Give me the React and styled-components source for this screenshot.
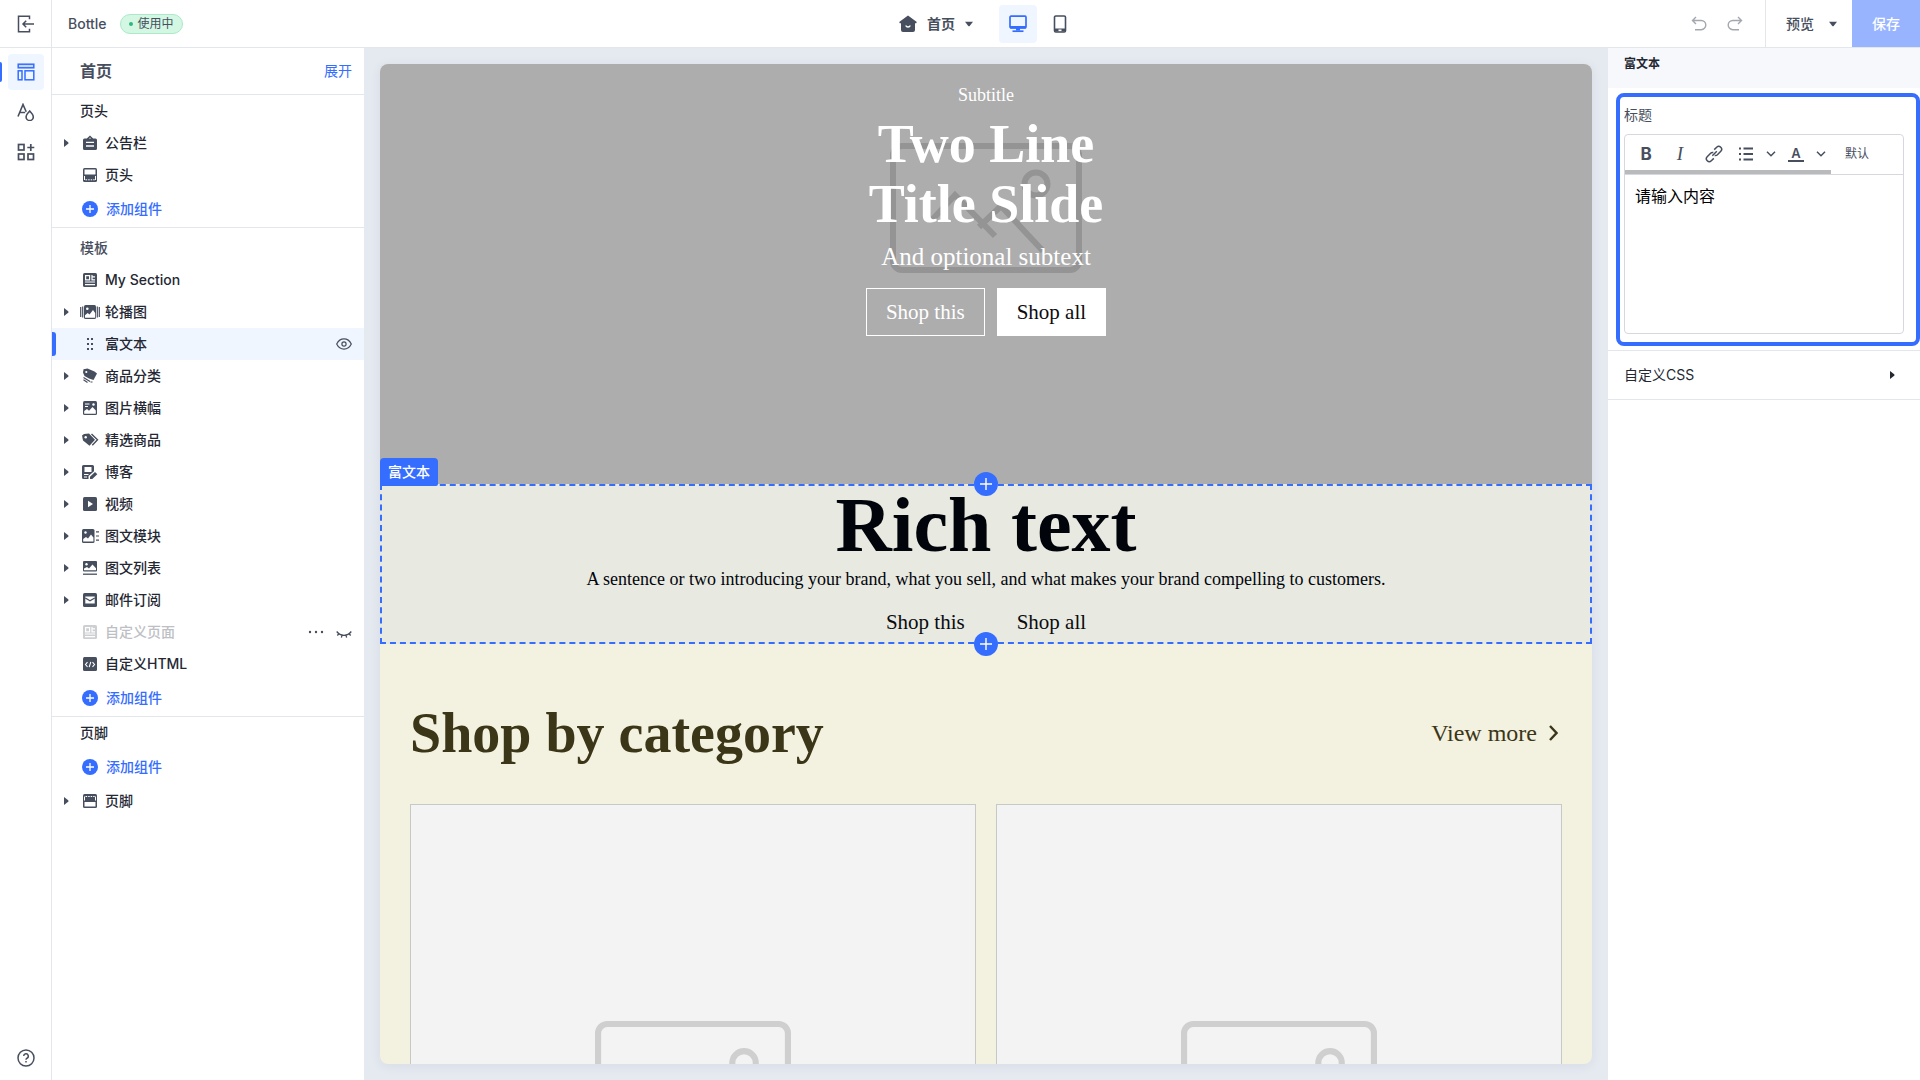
import React from 'react';
import styled, { createGlobalStyle, css } from 'styled-components';

const BLUE = '#356dff';
const INK = '#474f5e';
const LINE = '#e3e7eb';
const SERIF = '"Liberation Serif", "Noto Sans CJK SC", serif';

const GlobalStyle = createGlobalStyle`
  * { box-sizing: border-box; }
  body {
    margin: 0;
    font-family: Inter, "Noto Sans CJK SC", sans-serif;
    font-size: 14px;
    line-height: 20px;
    color: #242833;
  }
  button {
    font: inherit;
    color: inherit;
    background: none;
    border: 0;
    padding: 0;
    cursor: pointer;
  }
  h1, h2, h3, p, ul { margin: 0; padding: 0; font-weight: inherit; font-size: inherit; }
  ul { list-style: none; }
  svg { display: block; flex: none; }
`;

/* ---------- icons ---------- */

const Svg = ({ w = 16, h = w, box = `0 0 ${w} ${h}`, children, ...rest }) => (
  <svg width={w} height={h} viewBox={box} fill="none" aria-hidden="true" {...rest}>
    {children}
  </svg>
);

const Stroke = ({ children, sw = 1.3, ...rest }) => (
  <Svg stroke="currentColor" strokeWidth={sw} {...rest}>{children}</Svg>
);

const BackIcon = () => (
  <Stroke w={18} sw={1.5}>
    <path d="M12.5 4.2V1.2H1.5v15.600h11v-3M17 9H6M9.200 5.800 6 9l3.200 3.200" />
  </Stroke>
);

const LayoutIcon = () => (
  <Stroke w={18} sw={1.5}>
    <rect x="1.200" y="1.200" width="15.600" height="3.600" fill="#c6d8ff" />
    <rect x="1.200" y="7.800" width="3.800" height="9" />
    <rect x="8" y="7.800" width="8.800" height="9" />
  </Stroke>
);

const ThemeIcon = () => (
  <Stroke w={18} sw={1.6}>
    <path d="M1 13.500 6 1.500l3.200 7.300M2.700 9.500h5.500" />
    <path d="M12.700 8c2.300 2.400 3.600 4.300 3.600 5.900a3.600 3.600 0 0 1-7.200 0c0-1.600 1.300-3.500 3.600-5.900Z" />
  </Stroke>
);

const AppsIcon = () => (
  <Stroke w={18} sw={1.700}>
    <rect x="1.500" y="1.500" width="5.500" height="5.500" />
    <rect x="1.500" y="11" width="5.500" height="5.500" />
    <rect x="11" y="11" width="5.500" height="5.500" />
    <path d="M13.800 1v7M10.300 4.500h7" />
  </Stroke>
);

const HelpIcon = () => (
  <Stroke w={18} sw={1.500}>
    <circle cx="9" cy="9" r="8" />
    <path d="M6.700 7.100a2.300 2.300 0 1 1 3.300 2.100c-.7.350-1 .7-1 1.500" />
    <path d="M9 12v1.600" />
  </Stroke>
);

const HomeIcon = () => (
  <Svg w={18}>
    <path fill="currentColor" d="M9 .5 17.800 7l-.6 1.200H16V15a2 2 0 0 1-2 2H4a2 2 0 0 1-2-2V8.200H.8L.2 7Z" />
    <path stroke="#fff" strokeWidth="1.300" d="M6.700 10.500c.8 2 3.800 2 4.600 0" />
  </Svg>
);

const DesktopIcon = () => (
  <Stroke w={18} sw={1.700}>
    <rect x="1" y="1.200" width="16" height="11.600" rx="1" />
    <path fill="currentColor" stroke="none" d="M1 11h16v2.500H1zM7 13h4v2.500H7z" />
    <path d="M3.500 16.200h11" />
  </Stroke>
);

const MobileIcon = () => (
  <Stroke w={18} sw={1.600}>
    <rect x="3.500" y="1" width="11" height="16" rx="1.300" />
    <path fill="currentColor" stroke="none" d="M3.500 13.500h11v3h-11z" />
    <path stroke="#fff" d="M7.500 15.300h3" />
  </Stroke>
);

const UndoIcon = ({ flip }) => (
  <Stroke w={16} sw={1.400} transform={flip ? 'scale(-1 1)' : undefined}>
    <path d="M1.500 4.500h8.700a4.600 4.600 0 0 1 0 9.200H4M5 1 1.500 4.500 5 8" />
  </Stroke>
);

const CaretDown = () => (
  <Svg w={8} h={6}><path fill="currentColor" d="M0 .8h8L4.700 5a1 1 0 0 1-1.400 0Z" /></Svg>
);

const CaretRight = () => (
  <Svg w={5} h={8}><path fill="currentColor" d="M0 0v8l4.200-3.300a1 1 0 0 0 0-1.400Z" /></Svg>
);

const ChevronDown = () => (
  <Stroke w={10} h={6} sw={1.500}><path d="m1 .8 4 4 4-4" /></Stroke>
);

const EyeIcon = () => (
  <Stroke w={16} h={16} sw={1.200}>
    <path d="M.7 8C2.400 4.500 5 2.900 8 2.900S13.600 4.500 15.300 8C13.600 11.500 11 13.100 8 13.100S2.400 11.500.7 8Z" />
    <circle cx="8" cy="8" r="2.100" />
  </Stroke>
);

const EyeClosedIcon = () => (
  <Stroke w={16} h={16} sw={1.300}>
    <path d="M.7 7.500C4.500 12.600 11.500 12.600 15.300 7.500M3 9.700l-1.700 1.800M6 11.200l-.6 2.400M10 11.200l.6 2.400M13 9.700l1.700 1.800" />
  </Stroke>
);

const MoreIcon = () => (
  <Svg w={16} fill="currentColor">
    <circle cx="2" cy="8" r="1.200" /><circle cx="8" cy="8" r="1.200" /><circle cx="14" cy="8" r="1.200" />
  </Svg>
);

const AddIcon = () => (
  <Svg w={16}>
    <circle cx="8" cy="8" r="8" fill={BLUE} />
    <path stroke="#fff" strokeWidth="1.300" d="M8 4v8M4 8h8" />
  </Svg>
);

// filled 14px block that most of the section icons are cut out of
const Block = ({ children }) => (
  <Svg w={18} box="-1 -1 18 18">
    <rect x="1" y="1" width="14" height="14" rx="1.500" fill="currentColor" />
    {children}
  </Svg>
);

const sectionIcons = {
  notice: (
    <Svg w={18} box="-1 -1 18 18">
      <path fill="currentColor" d="M2.500 3.500h2.300L8 .6l3.200 2.900h2.300A1.500 1.500 0 0 1 15 5v8.500a1.500 1.500 0 0 1-1.500 1.500h-11A1.500 1.500 0 0 1 1 13.500V5a1.500 1.500 0 0 1 1.500-1.500Z" />
      <path stroke="#fff" strokeWidth="1.300" d="M4 7.300h8M4 11h8" />
      <path fill="#fff" d="M6.800 3.500 8 2.400l1.200 1.100Z" />
    </Svg>
  ),
  header: (
    <Block>
      <path fill="#fff" d="M2.500 2.500h11V7.500h-11z" />
      <path stroke="#fff" d="M3.500 12.800h1.700M6.200 12.800h1.500M8.700 12.800h1.500M11.200 12.800h1.500M2.500 9v4M13.500 9v4" />
    </Block>
  ),
  footer: (
    <Block>
      <path fill="#fff" d="M2.500 9h11v4.500h-11z" />
      <path stroke="#fff" d="M3.500 3.500h1.700M6.200 3.500h1.500M8.700 3.500h1.500M11.200 3.500h1.500M2.500 3.500v4M13.500 3.500v4" />
    </Block>
  ),
  section: (
    <Block>
      <path stroke="#fff" strokeWidth="1.200" d="M3.600 3.600h4v4.200h-4zM10 3v4.800h3M10 4.800h3M3 10h10M3 12.600h10" />
    </Block>
  ),
  carousel: (
    <Svg w={20} h={18} box="-2 -1 20 18">
      <rect x="2" y="1" width="12" height="14" rx="1.500" fill="currentColor" />
      <path stroke="currentColor" strokeWidth="1.200" d="M-1.300 3v10M.7 2.500v11M15.300 2.500v11M17.300 3v10" />
      <circle cx="5.300" cy="4.800" r="1.300" fill="#fff" />
      <path fill="#fff" d="m3 13.700v-2.400l2.700-2.300 1.800 1.500L11 6l2.200 3v4.700Z" />
    </Svg>
  ),
  drag: (
    <Svg w={18} fill="currentColor">
      {[3, 8, 13].map((y) => (
        <React.Fragment key={y}>
          <rect x="6" y={y} width="2" height="2" />
          <rect x="10" y={y} width="2" height="2" />
        </React.Fragment>
      ))}
    </Svg>
  ),
  category: (
    <Svg w={18}>
      <path fill="currentColor" d="M2.500 2.200 6.500 1.500l7 3 2.500 2L12.500 13 8 11.500 3.500 9 2 5.500Z" />
      <circle cx="5.300" cy="5" r="1.100" fill="#fff" />
      <path stroke="currentColor" strokeWidth="1.200" d="M2.500 10.500 9 14.500M2.500 12.800 6.500 15.500M9.500 15h2" />
    </Svg>
  ),
  banner: (
    <Block>
      <path stroke="#fff" d="M3 4h4.500M3 6.500h3" />
      <circle cx="11.500" cy="4.500" r="1.200" fill="#fff" />
      <path fill="#fff" d="M2.200 13.800v-2.700L5 9l2 1.700L10.500 7l3.300 3.500v3.300Z" />
    </Block>
  ),
  products: (
    <Svg w={18}>
      <path fill="currentColor" d="M1 4.500 3 3l5-.5 6 6.300-5.500 6L2 9.500Z" />
      <circle cx="4.700" cy="6.200" r="1.200" fill="#fff" />
      <path stroke="currentColor" strokeWidth="1.400" d="m10.500 3 6 5.700-5.200 5.500" />
    </Svg>
  ),
  blog: (
    <Svg w={18}>
      <path fill="currentColor" d="M2.500 2h9A1.500 1.500 0 0 1 13 3.500v4.800L7.500 13v3h-5A1.500 1.500 0 0 1 1 14.500v-11A1.500 1.500 0 0 1 2.500 2ZM9 13.800 14 9l2.300 2.200-5 4.800H9Z" />
      <path fill="#fff" d="M3.500 4h7v5h-7z" />
      <path stroke="#fff" d="M3 11.500h4.500M3 14h3" />
    </Svg>
  ),
  video: (
    <Block>
      <path fill="#fff" d="M6 4.800v6.400L11 8Z" />
    </Block>
  ),
  imageText: (
    <Svg w={18}>
      <rect x="1" y="2" width="12.500" height="14" rx="1.500" fill="currentColor" />
      <circle cx="4.500" cy="5.500" r="1.200" fill="#fff" />
      <path fill="#fff" d="M2.200 14.500V12L5 10l2 1.500L10 7.500l2.400 3v4Z" />
      <path stroke="currentColor" strokeWidth="1.200" d="M15 4.800h3M15 9h3M15 13.200h3" />
    </Svg>
  ),
  imageList: (
    <Svg w={18}>
      <rect x="2" y="2" width="14" height="10.500" rx="1" fill="currentColor" />
      <circle cx="5.500" cy="5.300" r="1.200" fill="#fff" />
      <path fill="#fff" d="M3 11.300V9.500L6 8l2 1.500L11.500 5.500l3.500 3.800v2Z" />
      <path stroke="currentColor" strokeWidth="1.300" d="M2 15.200h14" />
    </Svg>
  ),
  mail: (
    <Block>
      <path fill="#fff" d="M3.300 4.500h9.400v7H3.300z" />
      <path stroke="currentColor" strokeWidth="1.300" d="m3.300 6 4.700 2.800L12.700 6" />
    </Block>
  ),
  html: (
    <Block>
      <path stroke="#fff" strokeWidth="1.100" d="M5.500 6.200 3.500 8.500l2 2.300M10.500 6.200l2 2.300-2 2.300M8.800 5.800 7.200 11.200" />
    </Block>
  ),
};

const LinkIcon = () => (
  <Stroke w={18} sw={1.500}>
    <path d="m7.300 10.700 4.500-4.500M9.200 4.600 11.700 2.200a2.900 2.900 0 0 1 4.100 4.100l-3.400 3.500a2.900 2.900 0 0 1-2.700.7M8.800 13.400l-2.500 2.400a2.900 2.900 0 0 1-4.100-4.100l3.400-3.500a2.900 2.900 0 0 1 2.700-.7" />
  </Stroke>
);

const ListIcon = () => (
  <Stroke w={16} sw={2}>
    <path d="M1 2.500h2M1 8h2M1 13.500h2M5.500 2.500H15M5.500 8H15M5.500 13.500H15" />
  </Stroke>
);

const Placeholder = ({ w }) => (
  <Svg w={w} h={(w * 130) / 192} box="0 0 192 130" stroke="currentColor" strokeWidth="6">
    <rect x="3" y="3" width="186" height="124" rx="9" />
    <circle cx="146" cy="41" r="11.500" />
    <path d="m42 77 23-25 40 41M89 84l22-21 42 45" />
  </Svg>
);

/* ---------- layout ---------- */

const Shell = styled.div`
  display: grid;
  grid-template-rows: 48px minmax(0, 1fr);
  height: 100vh;
  background: #fff;
`;

const columns = css`
  display: grid;
  grid-template-columns: 52px 312px minmax(0, 1fr) 312px;
`;

const TopBar = styled.header`
  ${columns}
  border-bottom: 1px solid ${LINE};
  color: ${INK};
`;

const Body = styled.div`
  ${columns}
  min-height: 0;
`;

const ExitButton = styled.button`
  display: grid;
  place-items: center;
  border-right: 1px solid ${LINE};
`;

const ThemeName = styled.div`
  display: flex;
  align-items: center;
  gap: 13px;
  padding-left: 16px;
  font-weight: 500;
`;

const Status = styled.span`
  display: flex;
  align-items: center;
  gap: 5px;
  height: 20px;
  padding: 0 8px;
  border: 1px solid #abe9c9;
  border-radius: 10px;
  background: #d3f7e3;
  font-size: 12px;
  font-weight: 400;

  &::before {
    content: '';
    width: 4px;
    height: 4px;
    border-radius: 50%;
    background: #35b67c;
  }
`;

const PageSwitch = styled.div`
  display: flex;
  align-items: center;
  justify-content: center;
  gap: 4px;
  padding-left: 6px;
`;

const PageButton = styled.button`
  display: flex;
  align-items: center;
  gap: 10px;
  margin-right: 22px;
  font-weight: 600;
`;

const DeviceButton = styled.button`
  display: grid;
  place-items: center;
  width: 38px;
  height: 38px;
  border-radius: 4px;
  color: ${(p) => (p.$active ? BLUE : INK)};
  background: ${(p) => (p.$active ? '#eff6ff' : 'none')};
`;

const Actions = styled.div`
  display: flex;
  justify-content: flex-end;
`;

const History = styled.div`
  display: flex;
  align-items: center;
  gap: 20px;
  padding-right: 22px;
  color: #a3a7af;
`;

const PreviewButton = styled.button`
  display: flex;
  align-items: center;
  gap: 15px;
  padding: 0 15px 0 20px;
  border-left: 1px solid ${LINE};
  font-weight: 500;
`;

const SaveButton = styled.button`
  width: 68px;
  background: #99b4ff;
  color: #fff;
  font-weight: 500;
`;

const Rail = styled.nav`
  display: flex;
  flex-direction: column;
  align-items: center;
  gap: 4px;
  padding: 6px 0 12px;
  border-right: 1px solid ${LINE};
`;

const RailButton = styled.button`
  position: relative;
  display: grid;
  place-items: center;
  width: 36px;
  height: 36px;
  border-radius: 4px;
  color: ${(p) => (p.$active ? BLUE : INK)};
  background: ${(p) => (p.$active ? '#eff6ff' : 'none')};

  ${(p) => p.$last && css`
    height: 20px;
    margin-top: auto;
  `}

  ${(p) => p.$active && css`
    &::before {
      content: '';
      position: absolute;
      left: -8px;
      top: 8px;
      width: 2px;
      height: 20px;
      border-radius: 0 2px 2px 0;
      background: ${BLUE};
    }
  `}
`;

const Sidebar = styled.aside`
  min-height: 0;
  overflow: hidden;
`;

const SidebarHead = styled.div`
  display: flex;
  align-items: center;
  justify-content: space-between;
  height: 47px;
  padding: 0 12px 0 28px;
  border-bottom: 1px solid ${LINE};
`;

const SidebarTitle = styled.h1`
  font-size: 16px;
  font-weight: 600;
  color: ${INK};
`;

const ExpandButton = styled.button`
  color: ${BLUE};
`;

const Group = styled.section`
  padding-top: ${(p) => (p.$spaced ? 4 : 0)}px;

  & + & {
    border-top: 1px solid ${LINE};
  }
`;

const GroupTitle = styled.h2`
  padding-left: 28px;
  line-height: 32px;
  font-weight: 500;
  color: ${(p) => (p.$spaced ? INK : 'inherit')};
`;

const Row = styled.li`
  position: relative;
  display: grid;
  grid-template-columns: 11px 18px minmax(0, 1fr) auto;
  align-items: center;
  column-gap: 6px;
  height: 32px;
  padding: 0 12px;
  font-weight: 500;
  color: ${(p) => (p.$muted ? '#bdbfc4' : 'inherit')};
  background: ${(p) => (p.$selected ? '#eff6ff' : 'none')};

  ${(p) => p.$selected && css`
    &::before {
      content: '';
      position: absolute;
      left: 0;
      top: 4px;
      width: 4px;
      height: 24px;
      border-radius: 0 3px 3px 0;
      background: ${BLUE};
    }
  `}
`;

const RowCaret = styled.span`
  color: ${INK};
`;

const RowIcon = styled.span`
  display: grid;
  justify-content: center;
  color: ${(p) => (p.$muted ? '#cdcfd3' : INK)};
`;

const RowTools = styled.span`
  display: flex;
  gap: 12px;
  color: ${INK};
`;

const AddButton = styled.button`
  display: flex;
  align-items: center;
  gap: 8px;
  height: 36px;
  padding-left: 30px;
  font-weight: 500;
  color: ${BLUE};
`;

const Canvas = styled.main`
  min-width: 0;
  min-height: 0;
  padding: 16px;
  background: #e5e9f0;
`;

const Page = styled.div`
  height: 100%;
  overflow: hidden;
  border-radius: 8px;
  background: #f3f1df;
  box-shadow: 0 2px 12px rgba(40, 50, 90, 0.07);
  font-family: ${SERIF};
`;

const Hero = styled.section`
  display: flex;
  flex-direction: column;
  align-items: center;
  height: 420px;
  padding-top: 16px;
  background: #adadad;
  color: #fff;
`;

const Slide = styled.div`
  position: relative;
  display: flex;
  flex-direction: column;
  align-items: center;
  text-align: center;
`;

const SlideArt = styled.div`
  position: absolute;
  inset: 0;
  display: grid;
  place-items: center;
  color: #949494;
`;

const SlideSubtitle = styled.p`
  position: relative;
  font-size: 18px;
  line-height: 30px;
`;

const SlideTitle = styled.h2`
  position: relative;
  margin: 4px 0 8px;
  font-size: 54px;
  font-weight: 700;
  line-height: 60px;
`;

const SlideText = styled.p`
  position: relative;
  font-size: 25px;
  line-height: 30px;
`;

const ShopLinks = styled.div`
  position: relative;
  display: flex;
  justify-content: center;
  gap: 12px;
  margin-top: ${(p) => p.$top}px;
`;

const ShopLink = styled.a`
  padding: 0 ${(p) => (p.$kind ? 19 : 20)}px;
  font-size: 21px;
  line-height: ${(p) => (p.$kind ? 46 : 40)}px;
  text-decoration: none;
  color: ${(p) => (p.$kind === 'outline' ? '#fff' : '#0b0c10')};
  border: ${(p) => (p.$kind ? '1px solid #fff' : 0)};
  background: ${(p) => (p.$kind === 'solid' ? '#fff' : 'none')};
`;

const RichText = styled.section`
  position: relative;
  border: 2px dashed ${BLUE};
  background: #e8eae1;
  color: #02040c;
  text-align: center;
`;

const RichTitle = styled.h2`
  font-size: 78px;
  font-weight: 700;
  line-height: 78px;
`;

const RichBody = styled.p`
  font-size: 18px;
  line-height: 30px;
`;

const SectionTag = styled.span`
  position: absolute;
  left: -2px;
  bottom: 100%;
  padding: 0 8px;
  border-radius: 4px 4px 2px 0;
  background: ${BLUE};
  color: #fff;
  font: 500 14px/28px Inter, "Noto Sans CJK SC", sans-serif;
`;

const InsertButton = styled.button`
  position: absolute;
  left: 50%;
  ${(p) => p.$edge}: -14px;
  display: grid;
  place-items: center;
  width: 24px;
  height: 24px;
  margin-left: -12px;
  border-radius: 50%;
  background: ${BLUE};
  color: #fff;
  z-index: 1;
`;

const Categories = styled.section`
  padding: 56px 30px 0;
  color: #3b3618;
`;

const CategoriesHead = styled.div`
  display: flex;
  align-items: center;
  justify-content: space-between;
  margin-bottom: 38px;
`;

const CategoriesTitle = styled.h2`
  font-size: 56px;
  font-weight: 700;
  line-height: 66px;
`;

const MoreLink = styled.a`
  display: flex;
  align-items: center;
  gap: 12px;
  padding-right: 4px;
  font-size: 24px;
  line-height: 28px;
  color: inherit;
  text-decoration: none;
`;

const Cards = styled.div`
  display: grid;
  grid-template-columns: 1fr 1fr;
  gap: 20px;
`;

const Card = styled.div`
  display: grid;
  place-items: center;
  aspect-ratio: 1;
  border: 1px solid #c7c9c5;
  background: #f3f3f3;
  color: #cfcfcf;
`;

const Settings = styled.aside`
  min-height: 0;
`;

const SettingsHead = styled.h2`
  height: 40px;
  padding: 6px 16px;
  background: #f7f8fc;
  font-size: 12px;
  font-weight: 700;
`;

const Field = styled.div`
  margin: 5px 0 4px 8px;
  padding: 8px 12px 8px 4px;
  border: 4px solid ${BLUE};
  border-radius: 8px;
`;

const FieldLabel = styled.label`
  display: block;
  margin-bottom: 9px;
  color: ${INK};
`;

const Editor = styled.div`
  border: 1px solid #d6d8de;
  border-radius: 4px;
`;

const Tools = styled.div`
  position: relative;
  display: flex;
  align-items: center;
  height: 40px;
  padding: 0 0 2px 11px;
  border-bottom: 1px solid #d6d8de;
  color: ${INK};

  &::after {
    content: '';
    position: absolute;
    left: 0;
    bottom: 0;
    width: 74%;
    height: 4px;
    background: #b9babc;
  }
`;

const ToolButton = styled.button`
  display: grid;
  place-items: center;
  width: ${(p) => (p.$narrow ? 16 : 20)}px;
  height: 24px;
  margin-right: ${(p) => p.$gap || 0}px;
  font-size: ${(p) => (p.$text ? 12 : 17)}px;
  font-weight: ${(p) => (p.$bold ? 700 : 400)};
  white-space: nowrap;
`;

const ItalicMark = styled.em`
  font-family: ${SERIF};
  font-size: 19px;
`;

const ColorMark = styled.span`
  width: 16px;
  border-bottom: 2px solid currentColor;
  font-size: 13px;
  font-weight: 600;
  line-height: 14px;
`;

const EditorArea = styled.textarea`
  display: block;
  width: 100%;
  height: 158px;
  padding: 9px 10px;
  border: 0;
  outline: 0;
  resize: none;
  background: none;
  color: #000;
  font: 16px/24px Inter, "Noto Sans CJK SC", sans-serif;
`;

const Collapse = styled.button`
  display: flex;
  align-items: center;
  justify-content: space-between;
  width: 100%;
  height: 50px;
  padding: 0 25px 0 16px;
  border: solid ${LINE};
  border-width: 1px 0;
`;

/* ---------- data ---------- */

const groups = [
  {
    title: '页头',
    rows: [
      { icon: 'notice', label: '公告栏', open: true },
      { icon: 'header', label: '页头' },
      { add: true },
    ],
  },
  {
    title: '模板',
    spaced: true,
    rows: [
      { icon: 'section', label: 'My Section' },
      { icon: 'carousel', label: '轮播图', open: true },
      { icon: 'drag', label: '富文本', selected: true },
      { icon: 'category', label: '商品分类', open: true },
      { icon: 'banner', label: '图片横幅', open: true },
      { icon: 'products', label: '精选商品', open: true },
      { icon: 'blog', label: '博客', open: true },
      { icon: 'video', label: '视频', open: true },
      { icon: 'imageText', label: '图文模块', open: true },
      { icon: 'imageList', label: '图文列表', open: true },
      { icon: 'mail', label: '邮件订阅', open: true },
      { icon: 'section', label: '自定义页面', muted: true },
      { icon: 'html', label: '自定义HTML' },
      { add: true },
    ],
  },
  {
    title: '页脚',
    rows: [
      { add: true },
      { icon: 'footer', label: '页脚', open: true },
    ],
  },
];

const SectionRow = ({ icon, label, open, selected, muted }) => (
  <Row $selected={selected} $muted={muted}>
    <RowCaret>{open && <CaretRight />}</RowCaret>
    <RowIcon $muted={muted}>{sectionIcons[icon]}</RowIcon>
    <span>{label}</span>
    <RowTools>
      {muted && <button aria-label="更多"><MoreIcon /></button>}
      {muted && <button aria-label="显示"><EyeClosedIcon /></button>}
      {selected && <button aria-label="隐藏"><EyeIcon /></button>}
    </RowTools>
  </Row>
);

const PlusMark = () => (
  <Stroke w={12} sw={1.400}><path d="M6 0v12M0 6h12" /></Stroke>
);

const Header = () => (
  <TopBar>
    <ExitButton aria-label="退出"><BackIcon /></ExitButton>
    <ThemeName>
      Bottle
      <Status>使用中</Status>
    </ThemeName>
    <PageSwitch>
      <PageButton><HomeIcon />首页<CaretDown /></PageButton>
      <DeviceButton $active aria-label="桌面端"><DesktopIcon /></DeviceButton>
      <DeviceButton aria-label="移动端"><MobileIcon /></DeviceButton>
    </PageSwitch>
    <Actions>
      <History>
        <button aria-label="撤销"><UndoIcon /></button>
        <button aria-label="重做"><UndoIcon flip /></button>
      </History>
      <PreviewButton>预览<CaretDown /></PreviewButton>
      <SaveButton>保存</SaveButton>
    </Actions>
  </TopBar>
);

const SectionList = () => (
  <Sidebar>
    <SidebarHead>
      <SidebarTitle>首页</SidebarTitle>
      <ExpandButton>展开</ExpandButton>
    </SidebarHead>
    {groups.map((group) => (
      <Group key={group.title} $spaced={group.spaced}>
        <GroupTitle $spaced={group.spaced}>{group.title}</GroupTitle>
        <ul>
          {group.rows.map((row, i) => (row.add
            ? <li key={i}><AddButton><AddIcon />添加组件</AddButton></li>
            : <SectionRow key={i} {...row} />
          ))}
        </ul>
      </Group>
    ))}
  </Sidebar>
);

const Storefront = () => (
  <Canvas>
    <Page>
      <Hero>
        <Slide>
          <SlideArt><Placeholder w={192} /></SlideArt>
          <SlideSubtitle>Subtitle</SlideSubtitle>
          <SlideTitle>Two Line<br />Title Slide</SlideTitle>
          <SlideText>And optional subtext</SlideText>
          <ShopLinks $top={16}>
            <ShopLink href="#" $kind="outline">Shop this</ShopLink>
            <ShopLink href="#" $kind="solid">Shop all</ShopLink>
          </ShopLinks>
        </Slide>
      </Hero>
      <RichText>
        <SectionTag>富文本</SectionTag>
        <InsertButton $edge="top" aria-label="在上方添加"><PlusMark /></InsertButton>
        <RichTitle>Rich text</RichTitle>
        <RichBody>
          A sentence or two introducing your brand, what you sell, and what makes your brand compelling to customers.
        </RichBody>
        <ShopLinks $top={8}>
          <ShopLink href="#">Shop this</ShopLink>
          <ShopLink href="#">Shop all</ShopLink>
        </ShopLinks>
        <InsertButton $edge="bottom" aria-label="在下方添加"><PlusMark /></InsertButton>
      </RichText>
      <Categories>
        <CategoriesHead>
          <CategoriesTitle>Shop by category</CategoriesTitle>
          <MoreLink href="#">
            View more
            <Stroke w={9} h={16} sw={2.400}><path d="m1 1 6.500 7L1 15" /></Stroke>
          </MoreLink>
        </CategoriesHead>
        <Cards>
          <Card><Placeholder w={196} /></Card>
          <Card><Placeholder w={196} /></Card>
        </Cards>
      </Categories>
    </Page>
  </Canvas>
);

const SettingsPanel = () => (
  <Settings>
    <SettingsHead>富文本</SettingsHead>
    <Field>
      <FieldLabel htmlFor="rich-title">标题</FieldLabel>
      <Editor>
        <Tools>
          <ToolButton $bold $gap={14} aria-label="加粗">B</ToolButton>
          <ToolButton $gap={14} aria-label="斜体"><ItalicMark>I</ItalicMark></ToolButton>
          <ToolButton $gap={12} aria-label="链接"><LinkIcon /></ToolButton>
          <ToolButton $gap={7} aria-label="列表"><ListIcon /></ToolButton>
          <ToolButton $narrow $gap={7} aria-label="列表样式"><ChevronDown /></ToolButton>
          <ToolButton $gap={7} aria-label="文字颜色"><ColorMark>A</ColorMark></ToolButton>
          <ToolButton $narrow $gap={16} aria-label="更多颜色"><ChevronDown /></ToolButton>
          <ToolButton $text>默认</ToolButton>
        </Tools>
        <EditorArea id="rich-title" defaultValue="请输入内容" />
      </Editor>
    </Field>
    <Collapse>自定义CSS<CaretRight /></Collapse>
  </Settings>
);

const App = () => (
  <Shell>
    <GlobalStyle />
    <Header />
    <Body>
      <Rail>
        <RailButton $active aria-label="页面布局"><LayoutIcon /></RailButton>
        <RailButton aria-label="主题设置"><ThemeIcon /></RailButton>
        <RailButton aria-label="应用"><AppsIcon /></RailButton>
        <RailButton $last aria-label="帮助"><HelpIcon /></RailButton>
      </Rail>
      <SectionList />
      <Storefront />
      <SettingsPanel />
    </Body>
  </Shell>
);

export default App;
